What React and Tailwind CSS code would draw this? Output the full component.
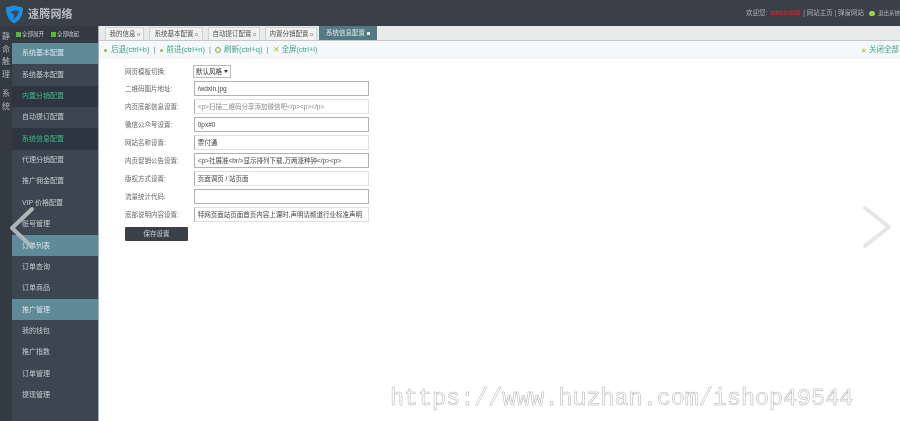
import React from "react";

const menu = [
  { name: "系统基本配置", active: true },
  { name: "系统基本配置" },
  { name: "内置分销配置", green: true },
  { name: "自动提订配置" },
  { name: "系统信息配置", green: true },
  { name: "代理分销配置" },
  { name: "推广佣金配置" },
  { name: "VIP 价格配置" },
  { name: "账号管理" },
  { name: "订单列表", active: true },
  { name: "订单查询" },
  { name: "订单商品" },
  { name: "推广管理", active: true },
  { name: "我的钱包" },
  { name: "推广指数" },
  { name: "订单管理" },
  { name: "提现管理" },
];

const tabs = [
  { name: "我的信息", w: "w-[39px]" },
  { name: "系统基本配置", w: "w-[54px]" },
  { name: "自动提订配置", w: "w-[52px]" },
  { name: "内置分销配置", w: "w-[52px]" },
];

const rows = [
  { label: "二维码图片地址:", value: "/wdxin.jpg", strong: true },
  { label: "内页底部信息设置:", value: "<p>扫描二维码分享添加微信吧</p><p></p>", strong: false, small: true },
  { label: "微信公众号设置:", value: "0px#0", strong: true },
  { label: "网站名称设置:", value: "票付通", strong: false },
  { label: "内页促销公告设置:", value: "<p>社展准<br/>显示排列下载,万两涨种钟</p><p>", strong: true },
  { label: "版权方式设置:", value: "页面调页 / 站页面", strong: false },
  { label: "流量统计代码:", value: "", strong: true },
  { label: "底部说明内容设置:", value: "特网页面站页面首页内容上课时,声明请频道行业标准声明", strong: false },
];

function Chevron({ left }) {
  return (
    <svg width="32" height="44" viewBox="0 0 32 44" fill="none">
      <path
        d={left ? "M24 3 L4 22 L24 41" : "M4 3 L28 22 L4 41"}
        stroke={left ? "#aeb4b8" : "#e6e6e6"}
        strokeWidth="4"
        strokeLinejoin="round"
        strokeLinecap="round"
      />
    </svg>
  );
}

function App() {
  return (
    <div className="relative h-[421px] w-[900px] overflow-hidden bg-white font-['Liberation_Sans','Noto_Sans_CJK_SC',sans-serif] blur-[0.6px]">
      {/* top bar */}
      <div className="flex h-[26px] items-center justify-between bg-[#3a4047] pl-[5px]">
        <div className="flex items-center gap-[4px]">
          <svg width="19" height="21" viewBox="0 0 19 20" className="mt-[3px]">
            <path d="M1 3 L9 1 L18 3 C18 11 15 16 9 19 C4 16 1 11 1 3 Z" fill="#1b8fe0" />
            <path d="M5 8 L9 6 L14 6 C13 11 11 13 8 15 C10 11 9 9 5 8 Z" fill="#38495a" />
          </svg>
          <span className="mt-[3px] text-[11px] font-bold tracking-[0.2px] text-[#b4bac0]">速腾网络</span>
        </div>
        <div className="flex items-center text-[6.5px] text-[#a8adb2]">
          <span>欢迎您:</span>
          <span className="ml-[3px] font-bold text-[#c4272c]">admin888</span>
          <span className="ml-[3px]">| 网站主页 | 弹窗网站</span>
          <span className="ml-[5px] h-[5px] w-[6px] rounded-full bg-[#a4d43c]" />
          <span className="ml-[3px] text-[5.5px] whitespace-nowrap">退出系统</span>
        </div>
      </div>

      <div className="flex h-[395px]">
        {/* folded rail */}
        <div className="flex w-[12px] flex-col items-center bg-[#333a41] pt-[5px] text-[8px] leading-[12.6px] text-[#aeb4b8]">
          <span>静</span>
          <span>命</span>
          <span>触</span>
          <span>理</span>
          <span className="mt-[7px]">系</span>
          <span>统</span>
        </div>

        {/* sidebar */}
        <div className="w-[87px] border-r border-[#a8adb0] bg-[#3c4650]">
          <div className="flex h-[17px] items-center gap-[7px] bg-[#333a41] pl-[4px] text-[5.5px] text-[#c8ccd0]">
            <span className="flex items-center gap-[1px]">
              <span className="h-[5px] w-[5px] bg-[#57b83c]" />
              全部展开
            </span>
            <span className="flex items-center gap-[1px]">
              <span className="h-[5px] w-[5px] bg-[#57b83c]" />
              全部收起
            </span>
          </div>
          {menu.map((item, index) => (
            <div
              key={index}
              className={`flex h-[21.35px] items-center pl-[10px] text-[7px] ${
                item.active
                  ? "bg-[#5f8b98] text-[#d8e2e6]"
                  : item.green
                    ? "bg-[#2d3640] text-[#3fb58a]"
                    : "text-[#c2c8cc]"
              }`}
            >
              {item.name}
            </div>
          ))}
        </div>

        {/* main */}
        <div className="flex-1">
          <div className="flex h-[15px] items-end gap-[5px] border-b border-[#c4c8c8] bg-[#e9ebeb] pl-[6px]">
            {tabs.map((tab) => (
              <div
                key={tab.name}
                className={`flex h-[13px] ${tab.w} items-center justify-center gap-[1px] border border-b-0 border-[#cfd2d2] bg-[#f0f1f1] text-[6.5px] whitespace-nowrap text-[#555]`}
              >
                {tab.name}
                <span className="h-[3px] w-[3px] shrink-0 border border-[#bbb]" />
              </div>
            ))}
            <div className="-ml-[3px] flex h-[14px] w-[58px] items-center justify-center gap-[2px] bg-[#537a83] text-[6.5px] whitespace-nowrap text-[#dfe8ea]">
              系统信息配置
              <span className="h-[3px] w-[3px] shrink-0 bg-[#dfe8ea]" />
            </div>
          </div>

          <div className="flex h-[18px] items-center justify-between bg-[#f5f8fb] pl-[5px] pr-[1px] text-[7.5px] text-[#3fa57e]">
            <div className="flex items-center gap-[2px] whitespace-nowrap">
              <span className="mr-[2px] h-[3px] w-[3px] rounded-full bg-[#9cb52c]" />
              后退(ctrl+b)
              <span className="mx-[2px] text-[#888]">|</span>
              <span className="mr-[2px] h-[3px] w-[3px] rounded-full bg-[#9cb52c]" />
              前进(ctrl+n)
              <span className="mx-[2px] text-[#888]">|</span>
              <span className="mr-[1px] h-[6px] w-[6px] rounded-full border border-[#7cae2c]" />
              刷新(ctrl+q)
              <span className="mx-[2px] text-[#888]">|</span>
              <span className="text-[8px] leading-none text-[#b5bf3c]">✕</span>
              全屏(ctrl+i)
            </div>
            <div className="flex items-center gap-[2px] whitespace-nowrap">
              <span className="text-[7px] leading-none text-[#a5b53c]">✕</span>
              关闭全部
            </div>
          </div>

          {/* form */}
          <div className="flex w-[270px] flex-col pl-[26px] pt-[6px]">
            <div className="flex h-[13px] items-center">
              <span className="w-[68px] text-[6.5px] whitespace-nowrap text-[#666]">网页模板切换:</span>
              <div className="flex h-[13px] w-[38px] items-center justify-center gap-[2px] border border-[#bbb] text-[6.5px] text-[#333]">
                默认风格
                <span className="h-0 w-0 border-x-[2px] border-t-[3px] border-x-transparent border-t-[#333]" />
              </div>
            </div>
            <div className="mt-[3px] flex flex-col gap-[3px]">
              {rows.map((row) => (
                <div key={row.label} className="flex h-[15px] items-center">
                  <span className="w-[69px] text-[6.5px] whitespace-nowrap text-[#666]">{row.label}</span>
                  <div
                    className={`flex h-[15px] w-[176px] items-center overflow-hidden px-[3px] text-[6.5px] whitespace-nowrap text-[#444] ${
                      row.strong ? "border-[1.5px] border-[#b0b0b0]" : "border border-[#e0e0e0] border-l-[#aaa]"
                    } ${row.small ? "text-[#888]" : ""}`}
                  >
                    {row.value}
                  </div>
                </div>
              ))}
            </div>
            <button className="mt-[5px] h-[14px] w-[63px] rounded-[1px] bg-[#3a4047] text-[6.5px] text-[#d0d4d8]">
              保存设置
            </button>
          </div>
        </div>
      </div>

      {/* slider arrows */}
      <div className="absolute left-[8px] top-[206px]">
        <Chevron left />
      </div>
      <div className="absolute left-[861px] top-[205px]">
        <Chevron />
      </div>

      {/* watermark */}
      <div className="absolute left-[390px] top-[385px] font-['Liberation_Mono',monospace] text-[23.4px] leading-[28px] whitespace-nowrap text-white [-webkit-text-stroke:0.5px_#b0b0b0]">
        https://www.huzhan.com/ishop49544
      </div>
    </div>
  );
}

export default App;
